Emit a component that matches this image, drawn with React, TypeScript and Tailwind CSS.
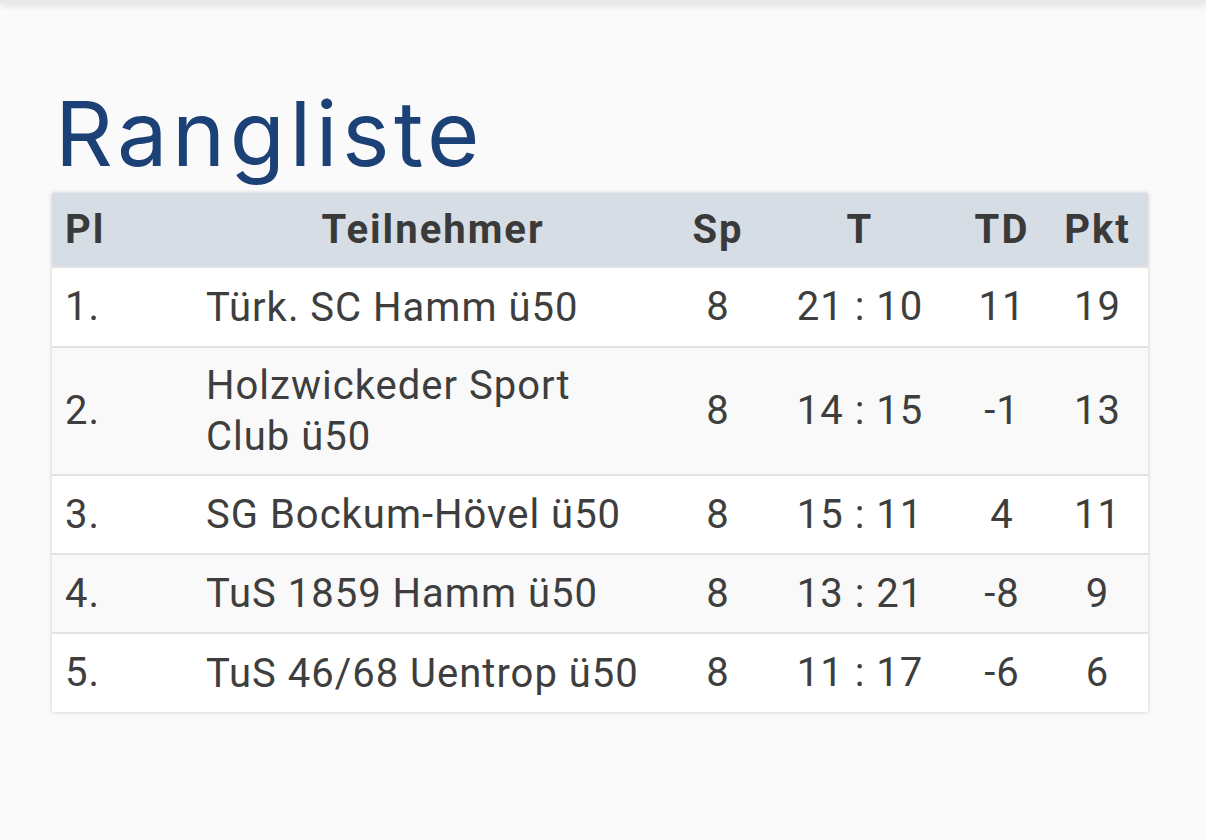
import React from "react";

const rows = [
  { pl: "1.", name: "Türk. SC Hamm ü50", sp: "8", t: "21 : 10", td: "11", pkt: "19" },
  { pl: "2.", name: "Holzwickeder Sport Club ü50", sp: "8", t: "14 : 15", td: "-1", pkt: "13" },
  { pl: "3.", name: "SG Bockum-Hövel ü50", sp: "8", t: "15 : 11", td: "4", pkt: "11" },
  { pl: "4.", name: "TuS 1859 Hamm ü50", sp: "8", t: "13 : 21", td: "-8", pkt: "9" },
  { pl: "5.", name: "TuS 46/68 Uentrop ü50", sp: "8", t: "11 : 17", td: "-6", pkt: "6" },
];

export default function App() {
  return (
    <div className="w-[1206px] h-[840px] bg-[#fafafa] overflow-hidden relative">
      <div className="h-[3px] bg-[#e8e8e8] shadow-[0_2px_6px_rgba(0,0,0,0.18)]" />
      <div className="pl-[52px] pt-[76px]">
        <h1
          className="text-[#1c4176] text-[90px] leading-[110px] pl-[3px] font-normal tracking-[4.5px]"
          style={{ fontFamily: "Inter, 'Noto Sans', sans-serif" }}
        >
          Rangliste
        </h1>
        <table
          className="mt-[4px] w-[1096px] table-fixed border-collapse bg-white shadow-[0_0_4px_rgba(0,0,0,0.2)] text-[#3e3e3e] text-[40px] tracking-[1px]"
          style={{ fontFamily: "Roboto, 'Liberation Sans', sans-serif" }}
        >
          <colgroup>
            <col className="w-[141px]" />
            <col className="w-[480px]" />
            <col className="w-[90px]" />
            <col className="w-[194px]" />
            <col className="w-[90px]" />
            <col className="w-[101px]" />
          </colgroup>
          <thead>
            <tr className="bg-[#d7dde5] h-[74px] text-[#3a3a3a] tracking-[2px]">
              <th className="text-left px-[13px] font-bold">Pl</th>
              <th className="text-center px-[13px] font-bold">Teilnehmer</th>
              <th className="text-center font-bold">Sp</th>
              <th className="text-center font-bold">T</th>
              <th className="text-center font-bold">TD</th>
              <th className="text-center font-bold">Pkt</th>
            </tr>
          </thead>
          <tbody>
            {rows.map((r, i) => (
              <tr
                key={i}
                className={`${i % 2 === 1 ? "bg-[#f9f9f9]" : "bg-white"} border-t-[2px] border-[#e2e2e2] ${i === 1 ? "h-[128px]" : i === 0 ? "h-[80px]" : "h-[79px]"}`}
              >
                <td className="px-[13px] text-left">{r.pl}</td>
                <td className="pl-[13px] pr-[20px] text-left leading-[51px]">{r.name}</td>
                <td className="text-center">{r.sp}</td>
                <td className="text-center">{r.t}</td>
                <td className="text-center">{r.td}</td>
                <td className="text-center">{r.pkt}</td>
              </tr>
            ))}
          </tbody>
        </table>
      </div>
    </div>
  );
}
